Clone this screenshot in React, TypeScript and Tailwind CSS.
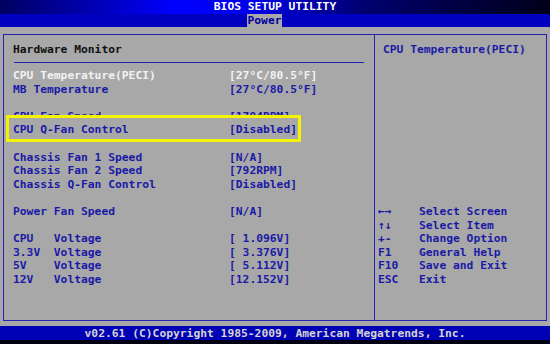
type Row = { label: string; value: string; kind?: 'selected' | 'clipped' | 'boxed' } | null

const rows: Row[] = [
  { label: 'CPU Temperature(PECI)', value: '[27°C/80.5°F]', kind: 'selected' },
  { label: 'MB Temperature', value: '[27°C/80.5°F]' },
  null,
  { label: 'CPU Fan Speed', value: '[1794RPM]', kind: 'clipped' },
  { label: 'CPU Q-Fan Control', value: '[Disabled]', kind: 'boxed' },
  null,
  { label: 'Chassis Fan 1 Speed', value: '[N/A]' },
  { label: 'Chassis Fan 2 Speed', value: '[792RPM]' },
  { label: 'Chassis Q-Fan Control', value: '[Disabled]' },
  null,
  { label: 'Power Fan Speed', value: '[N/A]' },
  null,
  { label: 'CPU   Voltage', value: '[ 1.096V]' },
  { label: '3.3V  Voltage', value: '[ 3.376V]' },
  { label: '5V    Voltage', value: '[ 5.112V]' },
  { label: '12V   Voltage', value: '[12.152V]' },
]

const help = [
  ['←→', 'Select Screen'],
  ['↑↓', 'Select Item'],
  ['+-', 'Change Option'],
  ['F1', 'General Help'],
  ['F10', 'Save and Exit'],
  ['ESC', 'Exit'],
]

function SetupRow({ row }: { row: Row }) {
  if (!row) return <div className="h-[13.6px]" />

  const color = row.kind === 'selected' ? 'text-[#f2f2f2]' : 'text-[#1a1aa6]'
  const line = (
    <div className={`flex ${color}`}>
      <span className="w-[216px]">{row.label}</span>
      <span>{row.value}</span>
    </div>
  )

  // the row above the yellow frame is half covered by it
  if (row.kind === 'clipped') {
    return (
      <div className="h-[13.6px]">
        <div className="h-[6px] overflow-hidden">{line}</div>
      </div>
    )
  }

  return (
    <div className="relative h-[13.6px]">
      {line}
      {row.kind === 'boxed' && (
        <div className="pointer-events-none absolute left-[-7px] top-[-8px] h-[27px] w-[295px] border-[3px] border-[#f4f400]" />
      )}
    </div>
  )
}

export default function App() {
  return (
    <div className="flex h-[344px] w-[550px] flex-col overflow-hidden bg-[#a8a8a8] font-['DejaVu_Sans_Mono',monospace] text-[11.3px] font-bold whitespace-pre">
      {/* title */}
      <div className="h-[14px] bg-[linear-gradient(to_right,#000060_0%,#0000ff_32%,#0000ee_45%,#000070_66%,#000018_100%)] text-center leading-[14px] text-white">
        BIOS SETUP UTILITY
      </div>

      {/* tabs */}
      <div className="flex h-[13px] bg-[#0000c0] pl-[247px]">
        <div className="w-[35px] bg-[#a8a8a8] pt-[1px] text-center leading-[12px] text-[#0000a0]">Power</div>
      </div>

      {/* main frame */}
      <div className="mx-[3px] mt-[7px] flex h-[287px] border border-[#2424b0]">
        <div className="w-[371px] border-r border-[#2424b0] pl-[9px] pt-[7.5px] leading-[13.6px]">
          <div className="text-[#101010]">Hardware Monitor</div>
          <div className="ml-[1px] mt-[6px] h-px w-[350px] bg-[#2424b0]" />
          <div className="mt-[6px]">
            {rows.map((row, i) => (
              <SetupRow key={i} row={row} />
            ))}
          </div>
        </div>

        <div className="flex-1 pt-[7.5px] leading-[13.6px] text-[#1a1aa6]">
          <div className="pl-[8px]">CPU Temperature(PECI)</div>
          <div className="mt-[149px] pl-[3px]">
            {help.map(([key, text]) => (
              <div key={key} className="flex h-[13.6px]">
                <span className="w-[41px]">{key}</span>
                <span>{text}</span>
              </div>
            ))}
          </div>
        </div>
      </div>

      {/* footer */}
      <div className="mt-[5px] h-[14px] bg-[#0000b4] pt-[1px] text-center leading-[13px] text-[#d4d4d4]">
        v02.61 (C)Copyright 1985-2009, American Megatrends, Inc.
      </div>
      <div className="h-[4px] bg-[#000010]" />
    </div>
  )
}
